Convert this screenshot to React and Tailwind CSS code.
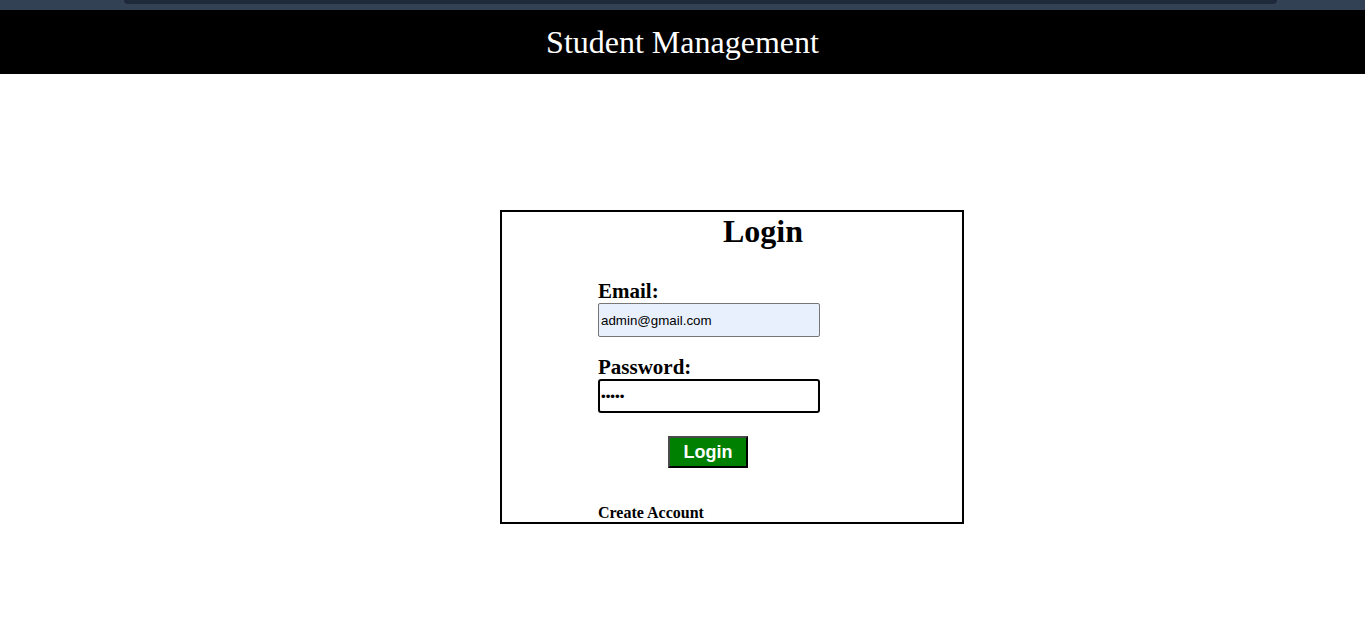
export default function App() {
  const serif = { fontFamily: '"Liberation Serif", "Times New Roman", serif' };
  const sans = { fontFamily: '"Liberation Sans", Arial, sans-serif' };
  return (
    <div className="w-[1365px] h-[630px] bg-white overflow-hidden" style={serif}>
      <div className="h-[10px] bg-[#334155] flex justify-start">
        <div className="ml-[124px] w-[1153px] h-[4px] bg-[#1e293b] rounded-b-[6px]" />
      </div>
      <div className="h-[64px] bg-black flex items-center justify-center">
        <h1 className="text-white text-[32px] leading-[36px] font-normal" style={serif}>Student Management</h1>
      </div>
      <div className="ml-[500px] mt-[136px] w-[464px] h-[314px] border-2 border-black box-border">
        <h2 className="pl-[62px] pt-[1px] text-center text-[32px] leading-[36px] font-bold text-black">Login</h2>
        <div className="pl-[96px] flex flex-col items-start">
          <label className="mt-[30px] text-[21px] leading-[24px] font-bold text-black">Email:</label>
          <input
            readOnly
            value="admin@gmail.com"
            className="w-[222px] h-[34px] border border-[#767676] rounded-[2px] bg-[#e8f0fe] px-[2px] text-[13.33px] text-black outline-none"
            style={sans}
          />
          <label className="mt-[18px] text-[21px] leading-[24px] font-bold text-black">Password:</label>
          <input
            readOnly
            type="password"
            value="12345"
            className="w-[222px] h-[34px] border-2 border-black rounded-[3px] bg-white px-[1px] text-[13.33px] text-black outline-none"
            style={sans}
          />
          <button
            className="mt-[23px] ml-[70px] w-[80px] h-[32px] bg-[#008000] text-white text-[18px] font-bold border-2 border-t-[#4a4a4a] border-l-[#4a4a4a] border-r-black border-b-black flex items-center justify-center"
            style={sans}
          >
            Login
          </button>
          <a className="mt-[36px] text-[16px] leading-[17px] font-bold text-black">Create Account</a>
        </div>
      </div>
    </div>
  );
}
